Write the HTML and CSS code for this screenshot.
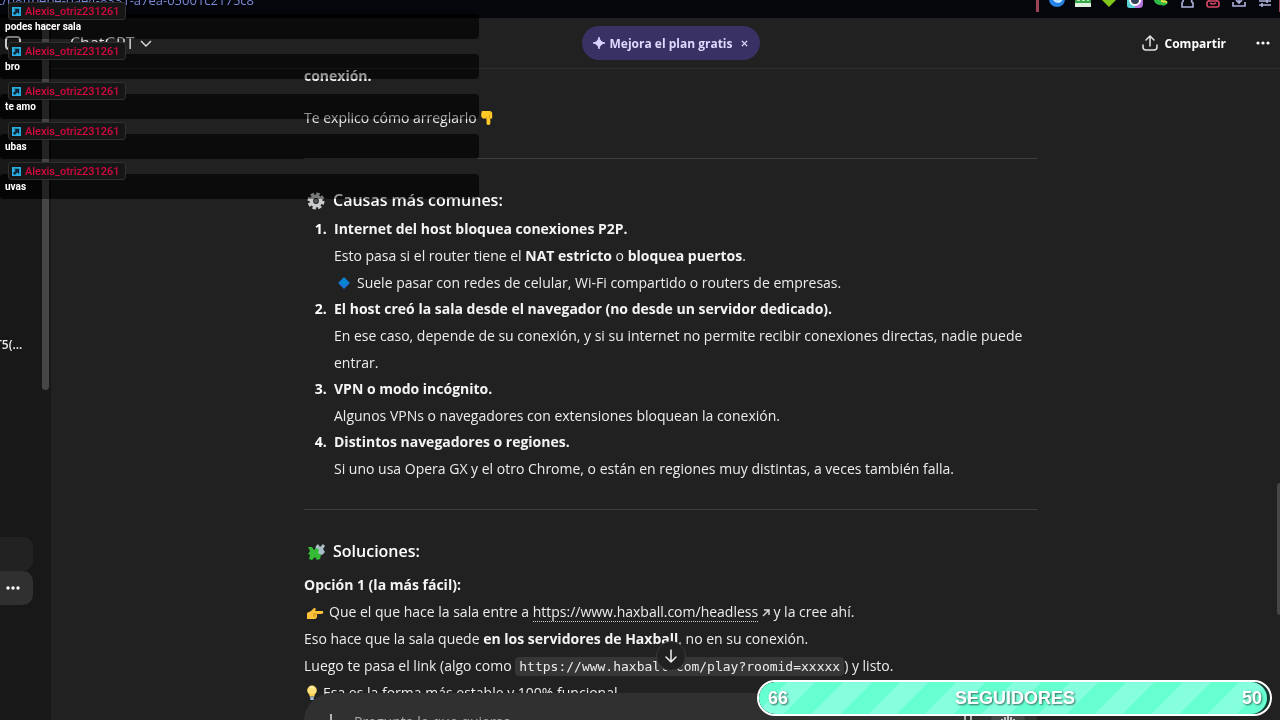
FILE: index.html
```html
<!DOCTYPE html>
<html lang="es">
<head>
<meta charset="utf-8">
<meta name="viewport" content="width=device-width, initial-scale=1">
<title>ChatGPT</title>
<link rel="stylesheet" href="styles.css">
</head>
<body>
<div class="browser-bar">
  <span class="url">c/b8ffbebe-bae4-8331-a7ea-05001c2175c8</span>
  <div class="extensions">
    <i class="divider"></i>
    <svg viewBox="0 0 16 16"><circle cx="8" cy="7" r="8" fill="#2583e8"/><path d="M4 3c0 8 8 9 9 3M7 5c0 4 4 3 4 0" fill="none" stroke="#c9eaff" stroke-width="2"/></svg>
    <svg viewBox="0 0 16 16"><path d="M0 0h16v14H0z" fill="#36a84b"/><path d="M0 11h16v4H0z" fill="#e1efdf"/><path d="M2 8h3M7 8h3M12 8h2" stroke="#b9eab6" stroke-width="2"/></svg>
    <svg viewBox="0 0 16 16"><path d="M1 8 8 1l7 7-7 7z" fill="#82c51c"/></svg>
    <svg viewBox="0 0 16 16"><rect width="16" height="16" rx="4" fill="#b875dc"/><path d="M0 7h8v9H3q-3 0-3-3z" fill="#55cfd4"/><circle cx="8" cy="8" r="5" fill="#344058" stroke="#fff" stroke-width="2"/></svg>
    <svg viewBox="0 0 16 16"><path d="M0 4c6-3 10 2 9 9-5 1-9-3-9-9z" fill="#30b944"/><path d="M6 8q5-3 9 3-5 5-7 1z" fill="#30b944"/><path d="m8 9 6 1" stroke="#eadb40" stroke-width="2"/></svg>
    <svg viewBox="0 0 16 16" fill="none" stroke="#aeb3dc" stroke-width="1.6"><path d="M2 2v5q4 0 1 4v4h11v-4q-3-2 0-4V2"/></svg>
    <svg viewBox="0 0 16 16" fill="none" stroke="#d94763" stroke-width="1.6"><rect x="2" y="9" width="12" height="6" rx="2"/><path d="M4 9q0-4 4-4t4 4M5 11q3 2 6 0"/></svg>
    <svg viewBox="0 0 16 16" fill="none" stroke="#aeb3dc" stroke-width="1.6"><path d="M2 10v4h12v-4M8 0v11M5 8l3 3 3-3"/></svg>
    <svg viewBox="0 0 16 16" fill="none" stroke="#aeb3dc" stroke-width="1.6"><path d="M2 9h12M2 13h12M10 7v4M5 11v4"/></svg>
    <i class="divider"></i>
  </div>
</div>

<div class="app">
  <aside class="sidebar">
    <span class="panel-icon"></span>
    <a class="chat-title" href="#">T5(...</a>
    <div class="side-foot">
      <div class="side-row"></div>
      <button class="side-row active" aria-label="Opciones"><svg viewBox="0 0 16 16" fill="#fff"><circle cx="3" cy="8" r="1.7"/><circle cx="8" cy="8" r="1.7"/><circle cx="13" cy="8" r="1.7"/></svg></button>
    </div>
    <div class="side-scroll"></div>
  </aside>

  <main class="main">
    <header class="topbar">
      <button class="model">ChatGPT <svg viewBox="0 0 12 12" fill="none" stroke="currentColor" stroke-width="1.4"><path d="m1 4 5 5 5-5"/></svg></button>
      <div class="plan">
        <svg class="spark" viewBox="0 0 14 14" fill="#d9d4ff"><path d="M7 0q1 6 7 7-6 1-7 7-1-6-7-7 6-1 7-7z" stroke="#d9d4ff"/></svg>
        <button class="plan-label">Mejora el plan gratis</button>
        <button class="plan-close" aria-label="Cerrar"><svg viewBox="0 0 8 8" fill="none" stroke="currentColor" stroke-width="1.6"><path d="m1 1 6 6M7 1 1 7"/></svg></button>
      </div>
      <div class="actions">
        <button class="share"><svg viewBox="0 0 16 16" fill="none" stroke="#e2e2e2" stroke-width="1.5" stroke-linecap="round"><path d="M1 10v2q0 3 3 3h8q3 0 3-3v-2M8 11V1M4 5l4-4 4 4"/></svg>Compartir</button>
        <button class="more" aria-label="Más"><svg viewBox="0 0 16 16" fill="#fff"><circle cx="3" cy="8" r="1.6"/><circle cx="8" cy="8" r="1.6"/><circle cx="13" cy="8" r="1.6"/></svg></button>
      </div>
    </header>

    <div class="thread">
      <article class="message">
        <p class="tail"><strong>conexión.</strong></p>
        <p class="intro">Te explico cómo arreglarlo <svg class="emoji small" viewBox="0 0 16 16"><path d="M2 1h8q3 0 3 3v5h-2v6q-2 2-4 0V9H3Q0 8 2 1z" fill="#ffc928"/><path d="M10 5v4M7 7v3" stroke="#d99b1c" fill="none"/></svg></p>
        <hr>
        <h3><svg class="emoji" viewBox="0 0 18 18"><circle cx="9" cy="9" r="7" fill="none" stroke="#c9cbcc" stroke-width="3" stroke-dasharray="3.4 2.1"/><circle cx="9" cy="9" r="4.7" fill="none" stroke="#c9cbcc" stroke-width="3.6"/><circle cx="9" cy="9" r="2" fill="#555"/></svg>Causas más comunes:</h3>
        <ol>
          <li><strong>Internet del host bloquea conexiones P2P.</strong>
            <p>Esto pasa si el router tiene el <strong>NAT estricto</strong> o <strong>bloquea puertos</strong>.</p>
            <p><svg class="emoji diamond" viewBox="0 0 18 18"><path d="m9 3 6 6-6 6-6-6z" fill="#1976d2"/><path d="m9 4 4 4-4 4-4-4z" fill="#0288d1"/></svg>Suele pasar con redes de celular, Wi-Fi compartido o routers de empresas.</p></li>
          <li><strong>El host creó la sala desde el navegador (no desde un servidor dedicado).</strong>
            <p>En ese caso, depende de su conexión, y si su internet no permite recibir conexiones directas, nadie puede entrar.</p></li>
          <li><strong>VPN o modo incógnito.</strong>
            <p>Algunos VPNs o navegadores con extensiones bloquean la conexión.</p></li>
          <li><strong>Distintos navegadores o regiones.</strong>
            <p>Si uno usa Opera GX y el otro Chrome, o están en regiones muy distintas, a veces también falla.</p></li>
        </ol>
        <hr>
        <h3><svg class="emoji" viewBox="0 0 18 18"><path d="m8 7 1-4 2-2 2 3 3-3 2 2-2 3 2 3-3 3-4-1z" fill="#a9bec9"/><path d="m1 4 4 0 2 3 3-2 2 2-1 3 3 2-1 4-3 1-2-3-3 3-3-1 1-4-2-1 2-3z" fill="#35bb35"/></svg>Soluciones:</h3>
        <div class="option">
          <p><strong>Opción 1 (la más fácil):</strong></p>
          <p><svg class="emoji hand" viewBox="0 0 18 18"><path d="M1 10q4-1 7-5 3 0 1 3h8q1 2-1 3h-5q1 5-3 5H1z" fill="#ffc33b"/><path d="M7 11h4M7 13h3" stroke="#c9891a"/></svg>Que el que hace la sala entre a <a href="https://www.haxball.com/headless">https://www.haxball.com/headless</a> <svg class="ext" viewBox="0 0 8 8" fill="none" stroke="#ddd" stroke-width="1.4"><path d="m1 7 6-6M2 1h5v5"/></svg> y la cree ahí.</p>
          <p>Eso hace que la sala quede <strong>en los servidores de Haxball</strong>, no en su conexión.</p>
          <p>Luego te pasa el link (algo como <code>https://www.haxball.com/play?roomid=xxxxx</code>) y listo.</p>
          <p><svg class="emoji bulb" viewBox="0 0 16 18"><circle cx="8" cy="6" r="5.5" fill="#ffdf75"/><path d="M5 10h6v3H5z" fill="#ffcf50"/><path d="M6 13h4v4H6z" fill="#9cb4ce"/><path d="M6 3q2-2 4 1" stroke="#fff" fill="none"/></svg>Esa es la forma más estable y 100% funcional.</p>
        </div>
      </article>
      <button class="to-bottom" aria-label="Bajar"><svg viewBox="0 0 16 16" fill="none" stroke="#eee" stroke-width="1.5" stroke-linecap="round"><path d="M8 2v12M3 9l5 5 5-5"/></svg></button>
      <form class="composer">
        <svg viewBox="0 0 16 16" fill="none" stroke="#ddd" stroke-width="1.5"><path d="M8 1v14M1 8h14"/></svg>
        <input type="text" aria-label="Mensaje" placeholder="Pregunta lo que quieras">
        <svg viewBox="0 0 16 16" fill="none" stroke="#ddd" stroke-width="1.5"><rect x="5" y="1" width="6" height="9" rx="3"/><path d="M2 8q0 5 6 5t6-5"/></svg>
        <span class="voice"><svg viewBox="0 0 16 16" fill="none" stroke="#eee" stroke-width="1.5"><path d="M2 6v4M5 4v8M8 2v12M11 4v8M14 6v4"/></svg></span>
      </form>
    </div>
    <div class="page-scroll"></div>
  </main>
</div>

<section class="live-chat" aria-label="Chat en vivo">
  <div class="chat-msg"><span class="user"><svg viewBox="0 0 10 10"><path d="M0 0h10v10H0z" fill="#28aee0"/><path d="M2 2h6v6L6 6 3 9 1 7l3-3z" fill="#0b2537"/></svg>Alexis_otriz231261</span>podes hacer sala</div>
  <div class="chat-msg"><span class="user"><svg viewBox="0 0 10 10"><path d="M0 0h10v10H0z" fill="#28aee0"/><path d="M2 2h6v6L6 6 3 9 1 7l3-3z" fill="#0b2537"/></svg>Alexis_otriz231261</span>bro</div>
  <div class="chat-msg"><span class="user"><svg viewBox="0 0 10 10"><path d="M0 0h10v10H0z" fill="#28aee0"/><path d="M2 2h6v6L6 6 3 9 1 7l3-3z" fill="#0b2537"/></svg>Alexis_otriz231261</span>te amo</div>
  <div class="chat-msg"><span class="user"><svg viewBox="0 0 10 10"><path d="M0 0h10v10H0z" fill="#28aee0"/><path d="M2 2h6v6L6 6 3 9 1 7l3-3z" fill="#0b2537"/></svg>Alexis_otriz231261</span>ubas</div>
  <div class="chat-msg"><span class="user"><svg viewBox="0 0 10 10"><path d="M0 0h10v10H0z" fill="#28aee0"/><path d="M2 2h6v6L6 6 3 9 1 7l3-3z" fill="#0b2537"/></svg>Alexis_otriz231261</span>uvas</div>
</section>

<section class="goal"><div class="goal-fill"><span>66</span><span>SEGUIDORES</span><span>50</span></div></section>
</body>
</html>
```
FILE: styles.css
```css
@counter-style steps {
  system: extends decimal;
  suffix: ".\a0\a0";
}
* { box-sizing: border-box; }
body {
  margin: 0;
  height: 100vh;
  display: flex;
  flex-direction: column;
  position: relative;
  overflow: hidden;
  background: #212121;
  color: #ececec;
  font: 14px/27px "Open Sans", "Noto Sans", sans-serif;
}
button { font: inherit; color: inherit; background: none; border: 0; padding: 0; display: flex; align-items: center; }
p, h3, ol { margin: 0; }
strong { font-weight: 700; color: #f4f4f4; }

.browser-bar {
  flex: none;
  height: 18px;
  display: flex;
  justify-content: space-between;
  align-items: flex-start;
  background: #05060c;
  overflow: hidden;
}
.url { margin: -8px 0 0 -4px; font: 13px/16px "Open Sans", sans-serif; color: #7b88d8; }
.extensions { display: flex; gap: 10px; margin: -8px -2px 0 0; }
.extensions svg { width: 16px; height: 16px; }
.extensions svg:last-of-type { margin-right: -4px; }
.divider { width: 3px; height: 20px; background: #9b4357; }

.app { flex: 1; min-height: 0; display: flex; }
.sidebar {
  position: relative;
  flex: none;
  width: 51px;
  display: flex;
  flex-direction: column;
  background: #181818;
}
.panel-icon { width: 16px; height: 14px; margin: 18px 0 0 5px; border: 2px solid #ccc; border-radius: 4px; }
.chat-title { margin-top: 281px; margin-left: -5px; font-size: 12px; font-weight: 600; color: #eee; text-decoration: none; }
.side-foot { margin-top: auto; margin-bottom: 115px; width: 33px; }
.side-row { width: 100%; height: 34px; border-radius: 0 10px 10px 0; background: #222; }
.side-row.active { background: #303030; padding-left: 5px; }
.side-row svg { width: 16px; height: 16px; }
.side-scroll { position: absolute; top: 5px; right: 2px; width: 7px; height: 367px; border-radius: 4px; background: #464646; }

.main { flex: 1; min-width: 0; position: relative; display: flex; flex-direction: column; }
.topbar {
  flex: none;
  height: 51px;
  display: grid;
  grid-template-columns: 1fr auto 1fr;
  align-items: center;
  padding: 0 9px 0 19px;
  border-bottom: 1px solid #303030;
}
.model { gap: 5px; font-size: 16px; color: #ddd; }
.model svg { width: 12px; height: 12px; }
.plan { display: flex; align-items: center; height: 34px; padding: 0 12px 0 11px; border-radius: 17px; background: #393163; color: #dedaff; font-size: 12px; font-weight: 700; }
.spark { width: 12px; height: 12px; margin-right: 5px; }
.plan-close { margin-left: 8px; }
.plan-close svg { width: 7px; height: 7px; }
.actions { display: flex; justify-content: flex-end; gap: 29px; }
.share { gap: 7px; font-size: 12px; font-weight: 700; color: #fff; }
.share svg, .more svg { width: 16px; height: 16px; }

.thread { flex: 1; min-height: 0; position: relative; overflow: hidden; padding-left: 10px; }
.message { max-width: 733px; margin: 0 auto; }
.tail { margin-top: -7px; }
.intro { margin-top: 15px; }
hr { height: 1px; margin: 27px 0 25px; border: 0; background: #404040; }
h3 { font-size: 16px; line-height: 32px; font-weight: 600; color: #fff; }
ol { padding-left: 30px; list-style: steps; }
li { line-height: 26px; }
li p { line-height: 27px; }
li::marker { font-weight: 700; color: #fff; }
.emoji { width: 18px; height: 18px; vertical-align: -4px; margin: 0 8px 0 3px; }
.emoji.small { width: 15px; height: 15px; vertical-align: -2px; margin: 0; }
.emoji.diamond { margin: 0 4px 0 1px; }
.emoji.hand { margin: 0 5px 0 2px; }
.emoji.bulb { width: 14px; height: 18px; margin: 0 4px 0 1px; }
.option { padding-top: 4px; }
.option a { color: #ececec; text-decoration: none; border-bottom: 1px dotted #ccc; }
.ext { width: 8px; height: 8px; }
code { padding: 2px 4px; border-radius: 4px; background: #363636; font: 13px "DejaVu Sans Mono", monospace; }

.to-bottom {
  position: absolute;
  left: calc(50% + 5px);
  bottom: 49px;
  width: 30px;
  height: 30px;
  margin-left: -15px;
  justify-content: center;
  border: 1px solid #393939;
  border-radius: 50%;
  background: #212121;
}
.to-bottom svg { width: 16px; height: 16px; }
.composer {
  position: absolute;
  left: 10px;
  right: 0;
  bottom: -29px;
  max-width: 733px;
  height: 56px;
  margin: 0 auto;
  display: flex;
  align-items: center;
  gap: 15px;
  padding: 0 12px 0 19px;
  border-radius: 28px;
  background: #303030;
}
.composer svg { flex: none; width: 16px; height: 16px; }
.composer input { flex: 1; min-width: 0; padding: 0; border: 0; outline: 0; background: none; color: #fff; font: inherit; }
.composer input::placeholder { color: #aaa; }
.voice { display: flex; padding: 9px; border-radius: 50%; background: #444; }
.page-scroll { position: absolute; right: 0; top: 465px; width: 3px; height: 132px; border-radius: 3px 0 0 3px; background: #464646; }

.live-chat { position: absolute; top: -1px; left: 0; width: 479px; font: bold 10px/25px Roboto, sans-serif; color: #fff; }
.chat-msg {
  position: relative;
  height: 25px;
  margin-top: 15px;
  padding-left: 5px;
  border-radius: 4px;
  backdrop-filter: brightness(0.6) contrast(1.08);
}
.user {
  position: absolute;
  top: -12px;
  left: 8px;
  height: 18px;
  display: flex;
  align-items: center;
  gap: 4px;
  padding: 0 5px 0 3px;
  border: 1px solid #303030;
  border-radius: 3px;
  background: #161616;
  color: #d3083f;
  font-size: 11px;
  font-weight: 500;
}
.user svg { width: 9px; height: 9px; }

.goal { position: absolute; right: 8px; bottom: 4px; width: 515px; height: 36px; border: 2px solid #fff; border-radius: 18px; background: #163b32; padding-right: 3px; overflow: hidden; }
.goal-fill {
  height: 100%;
  display: flex;
  align-items: center;
  justify-content: space-between;
  padding: 0 5px 0 9px;
  border-radius: 16px;
  background: repeating-linear-gradient(135deg, #66ffd0 0 20px, #85ffde 20px 40px);
  color: #fff;
  font: bold 18px/20px "Liberation Sans", Arial, sans-serif;
  text-shadow: 1px 1px 2px #346b60;
}
```
